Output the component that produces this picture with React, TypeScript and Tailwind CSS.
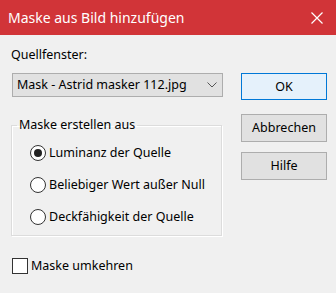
import React from "react";

function Radio({ label, checked }: { label: string; checked?: boolean }) {
  return (
    <div className="flex items-center h-[20px]">
      <span className="w-[16px] h-[16px] rounded-full border border-[#333333] bg-white flex items-center justify-center">
        {checked && <span className="w-[8px] h-[8px] rounded-full bg-[#222222]" />}
      </span>
      <span className="ml-[3px]">{label}</span>
    </div>
  );
}

export default function App() {
  return (
    <div
      className="w-[336px] h-[293px] bg-[#f0f0f0] text-[12.5px] leading-[20px] text-black flex flex-col"
      style={{ fontFamily: '"Noto Sans", "Segoe UI", sans-serif' }}
    >
      <div className="h-[35px] bg-[#d13438] text-white flex items-center justify-between pl-[8px] pr-[12px] shrink-0">
        <span className="text-[14px]">Maske aus Bild hinzufügen</span>
        <svg width="12" height="12" viewBox="0 0 12 12" className="mr-[1px]">
          <path d="M0.5 0.5 L11.5 11.5 M11.5 0.5 L0.5 11.5" stroke="white" strokeWidth="1.2" />
        </svg>
      </div>

      <div className="flex pl-[11px]">
        <div className="w-[212px] flex flex-col">
          <div className="mt-[10px]">Quellfenster:</div>
          <div className="mt-[8px] ml-[1px] h-[24px] border border-[#adadad] bg-[#e1e1e1] flex items-center justify-between pl-[4px] pr-[5px]">
            <span>Mask - Astrid masker 112.jpg</span>
            <svg width="10" height="6" viewBox="0 0 10 6">
              <path d="M0.5 0.5 L5 5 L9.5 0.5" fill="none" stroke="#555555" strokeWidth="1" />
            </svg>
          </div>

          <fieldset className="mt-[18px] w-[211px] h-[121px] border border-[#dcdcdc] shadow-[inset_1px_1px_0_#ffffff,1px_1px_0_#ffffff] pl-[18px] pt-[8px] flex flex-col gap-[12px]">
            <legend className="-ml-[13px] px-[2px]">Maske erstellen aus</legend>
            <Radio label="Luminanz der Quelle" checked />
            <Radio label="Beliebiger Wert außer Null" />
            <Radio label="Deckfähigkeit der Quelle" />
          </fieldset>

          <div className="mt-[20px] ml-[1px] flex items-center h-[20px]">
            <span className="w-[16px] h-[16px] border border-[#333333] bg-white" />
            <span className="ml-[3px]">Maske umkehren</span>
          </div>
        </div>

        <div className="ml-[18px] mt-[38px] flex flex-col w-[86px]">
          <button className="h-[27px] border border-[#0078d7] bg-[#e5f1fb]">OK</button>
          <button className="mt-[14px] h-[28px] border border-[#adadad] bg-[#e1e1e1]">Abbrechen</button>
          <button className="mt-[10px] h-[28px] border border-[#adadad] bg-[#e1e1e1]">Hilfe</button>
        </div>
      </div>
    </div>
  );
}
